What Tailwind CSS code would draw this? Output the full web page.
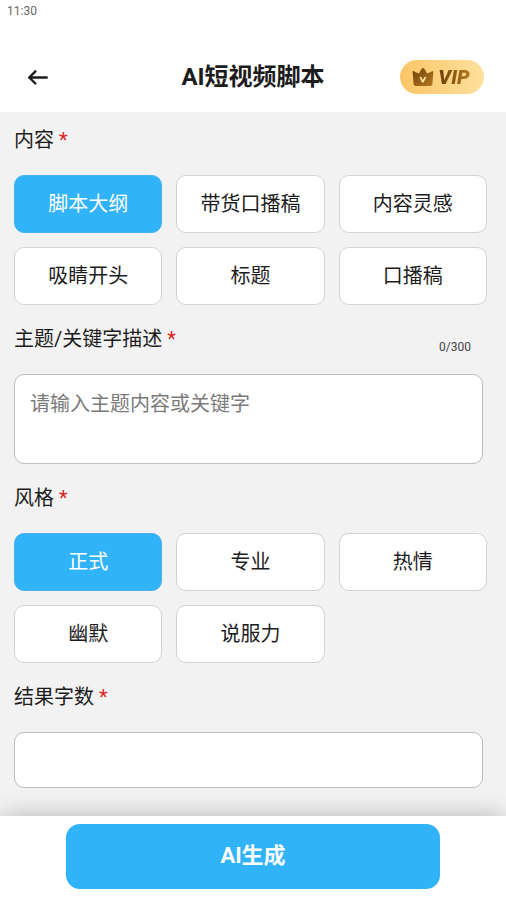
<!DOCTYPE html>
<html lang="zh-CN">
<head>
<meta charset="UTF-8">
<meta name="viewport" content="width=device-width, initial-scale=1">
<title>AI短视频脚本</title>
<script src="https://cdn.jsdelivr.net/npm/@tailwindcss/browser@4"></script>
</head>
<body class="flex min-h-screen flex-col bg-[#f2f2f2] font-[Roboto,'Noto_Sans_CJK_SC',sans-serif] text-xl text-[#1c1c1c]">
  <header class="bg-white">
    <div class="h-[42px] px-[7px] pt-[3px] text-[12px] leading-4 text-[#666]">11:30</div>
    <div class="grid h-[70px] grid-cols-[1fr_auto_1fr] items-center px-[22px]">
      <button type="button" aria-label="返回" class="h-8 w-8 justify-self-start pl-1">
        <svg viewBox="0 0 24 24" class="size-6" fill="none" stroke="#1c1c1c" stroke-width="2.4" stroke-linecap="round" stroke-linejoin="round"><path d="M20.7 12.5H3.2M9.4 6.3L3.2 12.5L9.4 18.5"/></svg>
      </button>
      <h1 class="text-2xl leading-8 font-bold">AI短视频脚本</h1>
      <button type="button" aria-label="VIP" class="flex h-[34px] w-[84px] items-center justify-center gap-1 justify-self-end rounded-full bg-linear-to-r from-[#fbc566] to-[#fee09c]">
        <svg viewBox="0 0 22 20" class="h-5 w-[22px]">
          <defs><linearGradient id="crown" x1="0" y1="0" x2="1" y2="1"><stop offset="0" stop-color="#6f4108"/><stop offset="1" stop-color="#b57a20"/></linearGradient></defs>
          <path d="M11 0.6Q13 2.2 15 6.6Q17.8 5.8 20.6 4Q21.5 3.8 21.4 4.8L20.4 17Q20.2 19 18.2 19H3.8Q1.8 19 1.6 17L0.6 4.8Q0.5 3.8 1.4 4Q4.2 5.8 7 6.6Q9 2.2 11 0.6Z" fill="url(#crown)"/>
          <path d="M8.6 10.6L10.8 14.8L13.2 10.6" fill="none" stroke="#ffe2a0" stroke-width="1.8" stroke-linecap="round" stroke-linejoin="round"/>
        </svg>
        <span class="bg-linear-to-r from-[#6f4108] to-[#b57a20] bg-clip-text pr-0.5 text-xl leading-6 font-black text-transparent italic">VIP</span>
      </button>
    </div>
  </header>

  <main class="flex-1 pt-[14px] pr-[19px] pb-7 pl-[14px]">
    <section aria-labelledby="content-title">
      <h2 id="content-title" class="leading-7">内容 <span class="text-[#dc1f1f]">*</span></h2>
      <div class="mt-[21px] grid grid-cols-3 gap-[14px]">
        <button type="button" aria-pressed="true" class="h-[58px] rounded-[10px] border border-[#4bb3ec] bg-[#31b3fa] text-white">脚本大纲</button>
        <button type="button" aria-pressed="false" class="h-[58px] rounded-[10px] border border-[#d2d2d2] bg-white">带货口播稿</button>
        <button type="button" aria-pressed="false" class="h-[58px] rounded-[10px] border border-[#d2d2d2] bg-white">内容灵感</button>
        <button type="button" aria-pressed="false" class="h-[58px] rounded-[10px] border border-[#d2d2d2] bg-white">吸睛开头</button>
        <button type="button" aria-pressed="false" class="h-[58px] rounded-[10px] border border-[#d2d2d2] bg-white">标题</button>
        <button type="button" aria-pressed="false" class="h-[58px] rounded-[10px] border border-[#d2d2d2] bg-white">口播稿</button>
      </div>
    </section>

    <section class="mt-5 mr-1">
      <div class="flex h-7 items-end justify-between">
        <label for="topic" class="leading-7">主题/关键字描述 <span class="text-[#dc1f1f]">*</span></label>
        <span class="mr-3 text-[12px] leading-3 text-[#444]">0/300</span>
      </div>
      <textarea id="topic" maxlength="300" placeholder="请输入主题内容或关键字" class="mt-[21px] block h-[90px] w-full resize-none rounded-[10px] border border-[#bdbdbd] bg-white px-[15px] py-[15px] leading-7 placeholder:text-[#7a7a7a]"></textarea>
    </section>

    <section aria-labelledby="style-title" class="mt-5">
      <h2 id="style-title" class="leading-7">风格 <span class="text-[#dc1f1f]">*</span></h2>
      <div class="mt-[21px] grid grid-cols-3 gap-[14px]">
        <button type="button" aria-pressed="true" class="h-[58px] rounded-[10px] border border-[#4bb3ec] bg-[#31b3fa] text-white">正式</button>
        <button type="button" aria-pressed="false" class="h-[58px] rounded-[10px] border border-[#d2d2d2] bg-white">专业</button>
        <button type="button" aria-pressed="false" class="h-[58px] rounded-[10px] border border-[#d2d2d2] bg-white">热情</button>
        <button type="button" aria-pressed="false" class="h-[58px] rounded-[10px] border border-[#d2d2d2] bg-white">幽默</button>
        <button type="button" aria-pressed="false" class="h-[58px] rounded-[10px] border border-[#d2d2d2] bg-white">说服力</button>
      </div>
    </section>

    <section class="mt-5 mr-1">
      <label for="count" class="block leading-7">结果字数 <span class="text-[#dc1f1f]">*</span></label>
      <input id="count" type="text" inputmode="numeric" class="mt-[21px] block h-14 w-full rounded-[10px] border border-[#bdbdbd] bg-white px-[15px]">
    </section>
  </main>

  <footer class="sticky bottom-0 bg-white px-[66px] pt-2 pb-[10px] shadow-[0_0_24px_-2px_rgba(0,0,0,0.3)]">
    <button type="button" class="h-[65px] w-full rounded-[14px] bg-[#31b3fa] text-[22px] font-bold text-white">AI生成</button>
  </footer>
</body>
</html>
